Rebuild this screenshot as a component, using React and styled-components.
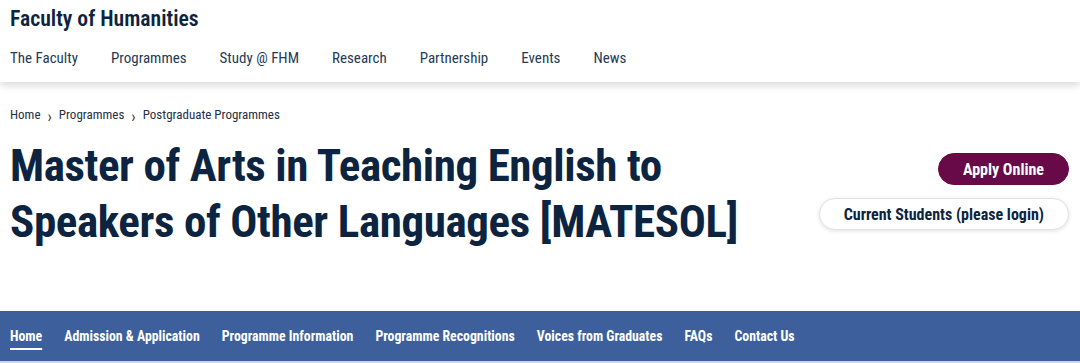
import React from 'react';
import styled, { createGlobalStyle } from 'styled-components';

const navy = '#0c2440';
const condensed = '"Roboto Condensed", "Open Sans", sans-serif';

const Global = createGlobalStyle`
  body {
    margin: 0;
    background: #fff;
    font-family: Roboto, sans-serif;
  }
`;

const Page = styled.div`
  width: 1080px;
  height: 363px;
  overflow: hidden;
  display: flex;
  flex-direction: column;
`;

const Header = styled.header`
  height: 82px;
  padding: 0 10px;
  box-sizing: border-box;
  box-shadow: 0 3px 8px rgba(0, 0, 0, 0.16);
  position: relative;
  z-index: 1;
`;

const SiteName = styled.div`
  font-family: ${condensed};
  font-weight: 600;
  font-size: 21.7px;
  line-height: 38px;
  color: ${navy};
`;

const TopNav = styled.nav`
  display: flex;
  gap: 33px;
  margin-top: 4px;
`;

const TopLink = styled.a`
  font-family: ${condensed};
  font-size: 15px;
  line-height: 32px;
  color: #243a57;
  text-decoration: none;
`;

const Main = styled.main`
  flex: 1;
  padding: 20px 11px 0 10px;
`;

const Crumbs = styled.div`
  display: flex;
  align-items: center;
  font-family: ${condensed};
  font-size: 13px;
  color: #1f2f45;
  height: 24px;
`;

const Chevron = styled.span`
  margin: 5px 7px 0 7px;
  font-size: 16px;
  line-height: 1;
  color: #333;
`;

const TitleRow = styled.div`
  display: flex;
  justify-content: space-between;
  align-items: flex-start;
  margin-top: 12px;
`;

const Title = styled.h1`
  margin: 0;
  font-family: ${condensed};
  font-weight: 700;
  font-size: 45px;
  line-height: 56px;
  letter-spacing: -0.4px;
  color: ${navy};
  width: 780px;
`;

const Actions = styled.div`
  display: flex;
  flex-direction: column;
  align-items: flex-end;
  gap: 13px;
  padding-top: 15px;
`;

const Button = styled.a`
  display: inline-flex;
  align-items: center;
  justify-content: center;
  height: 32px;
  padding: 0 24px;
  border-radius: 16px;
  box-sizing: border-box;
  font-family: ${condensed};
  font-weight: 700;
  font-size: 16px;
  text-decoration: none;
  background: ${p => (p.$primary ? '#680a47' : '#fff')};
  color: ${p => (p.$primary ? '#fff' : navy)};
  border: 1px solid ${p => (p.$primary ? '#680a47' : '#e2e2e2')};
  box-shadow: ${p => (p.$primary ? 'none' : '0 1px 4px rgba(0,0,0,0.12)')};
`;

const SubNav = styled.nav`
  height: 50px;
  background: #3d5f9c;
  border-bottom: 2px solid #c9d6ea;
  display: flex;
  align-items: center;
  gap: 22px;
  padding: 0 10px;
`;

const SubLink = styled.a`
  font-family: ${condensed};
  font-weight: 700;
  font-size: 13.8px;
  color: #fff;
  text-decoration: ${p => (p.$active ? 'underline' : 'none')};
  text-underline-offset: 7px;
  text-decoration-thickness: 1.5px;
`;

const topLinks = ['The Faculty', 'Programmes', 'Study @ FHM', 'Research', 'Partnership', 'Events', 'News'];
const subLinks = [
  'Home',
  'Admission & Application',
  'Programme Information',
  'Programme Recognitions',
  'Voices from Graduates',
  'FAQs',
  'Contact Us',
];

export default function App() {
  return (
    <Page>
      <Global />
      <Header>
        <SiteName>Faculty of Humanities</SiteName>
        <TopNav>
          {topLinks.map(l => (
            <TopLink key={l} href="#">{l}</TopLink>
          ))}
        </TopNav>
      </Header>
      <Main>
        <Crumbs>
          Home<Chevron>›</Chevron>Programmes<Chevron>›</Chevron>Postgraduate Programmes
        </Crumbs>
        <TitleRow>
          <Title>Master of Arts in Teaching English to Speakers of Other Languages [MATESOL]</Title>
          <Actions>
            <Button $primary href="#">Apply Online</Button>
            <Button href="#">Current Students (please login)</Button>
          </Actions>
        </TitleRow>
      </Main>
      <SubNav>
        {subLinks.map((l, i) => (
          <SubLink key={l} href="#" $active={i === 0}>{l}</SubLink>
        ))}
      </SubNav>
    </Page>
  );
}
